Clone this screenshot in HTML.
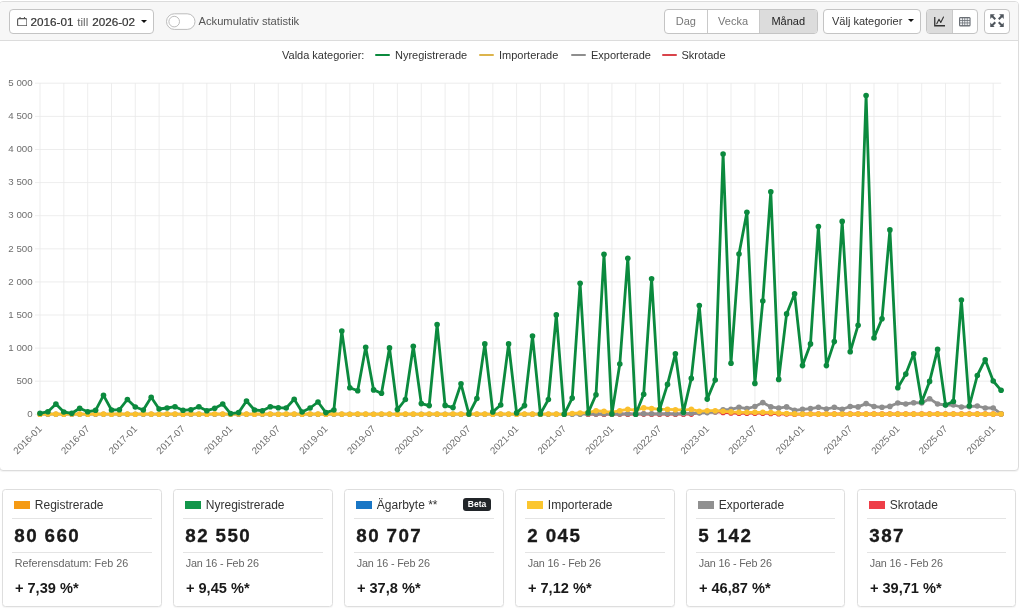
<!DOCTYPE html>
<html lang="sv"><head><meta charset="utf-8"><title>Fordonsstatistik</title>
<style>
*{box-sizing:border-box;margin:0;padding:0}
html,body{width:1020px;height:609px;overflow:hidden;background:#fff}
body{font-family:"Liberation Sans",sans-serif;color:#333;position:relative}
.card,.legend,.scard{will-change:transform}
.card{position:absolute;left:-1px;top:1px;width:1019.5px;height:470px;border:1px solid #dcdcdc;border-radius:4px;background:#fff;box-shadow:0 1px 1px rgba(0,0,0,.05)}
.hdr{position:absolute;left:0;top:0;right:0;height:39px;background:#f7f7f7;border-bottom:1px solid #dcdcdc;border-radius:3px 3px 0 0}
.btn{position:absolute;top:6.8px;height:25.4px;background:#fff;border:1px solid #c4c4c4;border-radius:4px;font-size:11px;line-height:23px;color:#333;white-space:nowrap}
.btn.act{background:#dcdcdc;border-color:#c4c4c4}
.grp{position:absolute;top:6.8px;height:25.4px;border:1px solid #c4c4c4;border-radius:4px;background:#fff;overflow:hidden;display:flex;font-size:11px;line-height:23px}
.grp>div{height:100%;text-align:center;border-right:1px solid #c9c9c9;color:#777}
.grp>div:last-child{border-right:0}
.grp>div.act{background:#dcdcdc;color:#222}
.caret{display:inline-block;width:0;height:0;border-left:3.3px solid transparent;border-right:3.3px solid transparent;border-top:3.6px solid #111;vertical-align:middle;margin-left:6px;position:relative;top:-1px}
.tog{position:absolute;left:165.5px;top:11px;width:29.5px;height:16.5px;border:1px solid #bdbdbd;border-radius:9px;background:#fff}
.tog:after{content:"";position:absolute;left:1.5px;top:1.5px;width:11.5px;height:11.5px;border-radius:50%;border:1px solid #bdbdbd;background:#fff}
.toglbl{position:absolute;left:198.5px;top:6.5px;font-size:11.2px;line-height:25px;color:#555;white-space:nowrap}
.legend{position:absolute;top:46.5px;left:0;font-size:11px;line-height:16px;color:#333;white-space:nowrap}
.legend span{position:absolute;top:0}
.legend i{position:absolute;top:6.5px;height:2.6px;width:15.5px;border-radius:1px}
svg.chart{position:absolute;left:0;top:70px}
svg .ax text{font-family:"Liberation Sans",sans-serif;font-size:9.7px;fill:#6e6e6e}
.scard{position:absolute;top:489px;width:159.3px;height:117.6px;border:1px solid #dedede;border-radius:3.5px;background:#fff;box-shadow:0 1px 1px rgba(0,0,0,.04)}
.scard .st{position:absolute;left:0;top:0;width:100%;height:28px}
.scard .st i{position:absolute;left:11px;top:11.4px;width:15.6px;height:7.5px}
.scard .st span{position:absolute;left:31.8px;top:7.4px;font-size:12px;line-height:16px;color:#333;white-space:nowrap}
.scard .st .beta{left:auto;right:11.8px;top:8.4px;background:#212529;color:#fff;font-size:8.5px;font-weight:700;line-height:13px;height:13px;padding:0 5px;border-radius:3px}
.scard .hr{position:absolute;left:9px;right:9px;height:1px;background:#e4e4e4}
.scard .h1{top:28px}
.scard .h2{top:61.5px}
.scard .num{position:absolute;left:11.3px;top:34px;font-size:18.8px;line-height:24px;font-weight:700;letter-spacing:1.4px;-webkit-text-stroke:.3px #1a1a1a;color:#1a1a1a;white-space:nowrap}
.scard .sub{position:absolute;left:11.8px;top:65.4px;font-size:10.8px;line-height:16px;color:#666;white-space:nowrap}
.scard .pct{position:absolute;left:11.9px;top:88.4px;font-size:14.6px;line-height:20px;font-weight:700;color:#1a1a1a;white-space:nowrap}
</style></head><body>
<div class="card">
 <div class="hdr">
  <div class="btn" style="left:9px;width:144.5px;padding-left:20.5px;font-size:11.7px;word-spacing:.6px"><svg style="position:absolute;left:6.8px;top:7px" width="10.5" height="9.5" viewBox="0 0 21 19"><rect x="1.2" y="3.2" width="18.6" height="14.6" rx="2.5" fill="none" stroke="#555" stroke-width="2.2"/><path d="M6 0v4M15 0v4" stroke="#555" stroke-width="2.2"/></svg><b style="font-weight:400;-webkit-text-stroke:.2px #333">2016-01</b> <span style="color:#666">till</span> <b style="font-weight:400;-webkit-text-stroke:.2px #333">2026-02</b><span class="caret"></span></div>
  <svg style="position:absolute;left:164px;top:9px" width="34" height="22" viewBox="0 0 34 22"><rect x="2.5" y="2.8" width="28.5" height="15.6" rx="7.8" fill="#fff" stroke="#bcbcbc" stroke-width="1"/><circle cx="10.2" cy="10.6" r="5.3" fill="#fff" stroke="#bcbcbc" stroke-width="1"/></svg><div class="toglbl">Ackumulativ statistik</div>
  <div class="grp" style="left:664px;width:154px"><div style="width:43px">Dag</div><div style="width:52.5px">Vecka</div><div class="act" style="width:58px">Månad</div></div>
  <div class="btn" style="left:823px;width:97.6px;padding-left:8px">Välj kategorier<span class="caret"></span></div>
  <div class="grp" style="left:926px;width:52px"><div class="act" style="width:27px;position:relative"><svg style="position:absolute;left:7px;top:6.5px" width="11" height="10.5" viewBox="0 0 22 21"><path d="M1.5 2v17.5H22" fill="none" stroke="#333" stroke-width="2.6"/><path d="M5.5 15.5l4.5-9 3.5 6.5L19 2" fill="none" stroke="#333" stroke-width="2.2" stroke-linejoin="round" stroke-linecap="round"/></svg></div><div style="width:25px;position:relative"><svg style="position:absolute;left:6.5px;top:7.4px" width="11.6" height="9.4" viewBox="0 0 23.2 18.8"><rect x="0" y="0" width="23.2" height="18.8" rx="3" fill="#6a6f75"/><g fill="#eef0f2"><rect x="2.2" y="2.6" width="3.9" height="3.4"/><rect x="7.5" y="2.6" width="3.4" height="3.4"/><rect x="12.3" y="2.6" width="3.4" height="3.4"/><rect x="17.1" y="2.6" width="3.9" height="3.4"/><rect x="2.2" y="7.6" width="3.9" height="3.5"/><rect x="7.5" y="7.6" width="3.4" height="3.5"/><rect x="12.3" y="7.6" width="3.4" height="3.5"/><rect x="17.1" y="7.6" width="3.9" height="3.5"/><rect x="2.2" y="12.7" width="3.9" height="3.5"/><rect x="7.5" y="12.7" width="3.4" height="3.5"/><rect x="12.3" y="12.7" width="3.4" height="3.5"/><rect x="17.1" y="12.7" width="3.9" height="3.5"/></g></svg></div></div>
  <div class="btn" style="left:984.3px;width:25.4px"><svg style="position:absolute;left:4.7px;top:4.2px" width="14" height="13.5" viewBox="0 0 28 27"><g fill="#4f565d"><path d="M0.5 0.5 L9.8 0.5 L6.6 3.7 L12.0 9.1 L9.1 12.0 L3.7 6.6 L0.5 9.8z"/><path d="M27.5 0.5 L18.2 0.5 L21.4 3.7 L16.0 9.1 L18.9 12.0 L24.3 6.6 L27.5 9.8z"/><path d="M0.5 26.5 L9.8 26.5 L6.6 23.3 L12.0 17.9 L9.1 15.0 L3.7 20.4 L0.5 17.2z"/><path d="M27.5 26.5 L18.2 26.5 L21.4 23.3 L16.0 17.9 L18.9 15.0 L24.3 20.4 L27.5 17.2z"/></g></svg></div>
 </div>
</div>
<div class="legend">
 <span style="left:282px">Valda kategorier:</span>
 <i style="left:374.5px;background:#0b8a3e"></i><span style="left:395px">Nyregistrerade</span>
 <i style="left:478.5px;background:#dcb44c"></i><span style="left:499px">Importerade</span>
 <i style="left:570.5px;background:#8e8e8e"></i><span style="left:591px">Exporterade</span>
 <i style="left:661.5px;background:#d9434a"></i><span style="left:681.5px">Skrotade</span>
</div>
<svg class="chart" width="1020" height="400" viewBox="0 70 1020 400"><g stroke="#e8e8e8" stroke-width="0.8" shape-rendering="auto"><line x1="35" x2="1001.2" y1="414.3" y2="414.3"/><line x1="35" x2="1001.2" y1="381.2" y2="381.2"/><line x1="35" x2="1001.2" y1="348.1" y2="348.1"/><line x1="35" x2="1001.2" y1="315.0" y2="315.0"/><line x1="35" x2="1001.2" y1="281.9" y2="281.9"/><line x1="35" x2="1001.2" y1="248.8" y2="248.8"/><line x1="35" x2="1001.2" y1="215.7" y2="215.7"/><line x1="35" x2="1001.2" y1="182.6" y2="182.6"/><line x1="35" x2="1001.2" y1="149.5" y2="149.5"/><line x1="35" x2="1001.2" y1="116.4" y2="116.4"/><line x1="35" x2="1001.2" y1="83.2" y2="83.2"/><line x1="40.0" x2="40.0" y1="83.2" y2="415.8"/><line x1="63.8" x2="63.8" y1="83.2" y2="415.8"/><line x1="87.7" x2="87.7" y1="83.2" y2="415.8"/><line x1="111.5" x2="111.5" y1="83.2" y2="415.8"/><line x1="135.3" x2="135.3" y1="83.2" y2="415.8"/><line x1="159.1" x2="159.1" y1="83.2" y2="415.8"/><line x1="183.0" x2="183.0" y1="83.2" y2="415.8"/><line x1="206.8" x2="206.8" y1="83.2" y2="415.8"/><line x1="230.6" x2="230.6" y1="83.2" y2="415.8"/><line x1="254.5" x2="254.5" y1="83.2" y2="415.8"/><line x1="278.3" x2="278.3" y1="83.2" y2="415.8"/><line x1="302.1" x2="302.1" y1="83.2" y2="415.8"/><line x1="325.9" x2="325.9" y1="83.2" y2="415.8"/><line x1="349.8" x2="349.8" y1="83.2" y2="415.8"/><line x1="373.6" x2="373.6" y1="83.2" y2="415.8"/><line x1="397.4" x2="397.4" y1="83.2" y2="415.8"/><line x1="421.3" x2="421.3" y1="83.2" y2="415.8"/><line x1="445.1" x2="445.1" y1="83.2" y2="415.8"/><line x1="468.9" x2="468.9" y1="83.2" y2="415.8"/><line x1="492.8" x2="492.8" y1="83.2" y2="415.8"/><line x1="516.6" x2="516.6" y1="83.2" y2="415.8"/><line x1="540.4" x2="540.4" y1="83.2" y2="415.8"/><line x1="564.2" x2="564.2" y1="83.2" y2="415.8"/><line x1="588.1" x2="588.1" y1="83.2" y2="415.8"/><line x1="611.9" x2="611.9" y1="83.2" y2="415.8"/><line x1="635.7" x2="635.7" y1="83.2" y2="415.8"/><line x1="659.6" x2="659.6" y1="83.2" y2="415.8"/><line x1="683.4" x2="683.4" y1="83.2" y2="415.8"/><line x1="707.2" x2="707.2" y1="83.2" y2="415.8"/><line x1="731.0" x2="731.0" y1="83.2" y2="415.8"/><line x1="754.9" x2="754.9" y1="83.2" y2="415.8"/><line x1="778.7" x2="778.7" y1="83.2" y2="415.8"/><line x1="802.5" x2="802.5" y1="83.2" y2="415.8"/><line x1="826.4" x2="826.4" y1="83.2" y2="415.8"/><line x1="850.2" x2="850.2" y1="83.2" y2="415.8"/><line x1="874.0" x2="874.0" y1="83.2" y2="415.8"/><line x1="897.8" x2="897.8" y1="83.2" y2="415.8"/><line x1="921.7" x2="921.7" y1="83.2" y2="415.8"/><line x1="945.5" x2="945.5" y1="83.2" y2="415.8"/><line x1="969.3" x2="969.3" y1="83.2" y2="415.8"/><line x1="993.2" x2="993.2" y1="83.2" y2="415.8"/></g><g class="ax"><text x="32.6" y="417.0" text-anchor="end">0</text><text x="32.6" y="383.9" text-anchor="end">500</text><text x="32.6" y="350.8" text-anchor="end">1 000</text><text x="32.6" y="317.7" text-anchor="end">1 500</text><text x="32.6" y="284.6" text-anchor="end">2 000</text><text x="32.6" y="251.5" text-anchor="end">2 500</text><text x="32.6" y="218.4" text-anchor="end">3 000</text><text x="32.6" y="185.3" text-anchor="end">3 500</text><text x="32.6" y="152.2" text-anchor="end">4 000</text><text x="32.6" y="119.1" text-anchor="end">4 500</text><text x="32.6" y="86.0" text-anchor="end">5 000</text></g><g class="ax"><text transform="translate(42.5,429.5) rotate(-45)" text-anchor="end">2016-01</text><text transform="translate(90.2,429.5) rotate(-45)" text-anchor="end">2016-07</text><text transform="translate(137.8,429.5) rotate(-45)" text-anchor="end">2017-01</text><text transform="translate(185.5,429.5) rotate(-45)" text-anchor="end">2017-07</text><text transform="translate(233.1,429.5) rotate(-45)" text-anchor="end">2018-01</text><text transform="translate(280.8,429.5) rotate(-45)" text-anchor="end">2018-07</text><text transform="translate(328.4,429.5) rotate(-45)" text-anchor="end">2019-01</text><text transform="translate(376.1,429.5) rotate(-45)" text-anchor="end">2019-07</text><text transform="translate(423.8,429.5) rotate(-45)" text-anchor="end">2020-01</text><text transform="translate(471.4,429.5) rotate(-45)" text-anchor="end">2020-07</text><text transform="translate(519.1,429.5) rotate(-45)" text-anchor="end">2021-01</text><text transform="translate(566.7,429.5) rotate(-45)" text-anchor="end">2021-07</text><text transform="translate(614.4,429.5) rotate(-45)" text-anchor="end">2022-01</text><text transform="translate(662.1,429.5) rotate(-45)" text-anchor="end">2022-07</text><text transform="translate(709.7,429.5) rotate(-45)" text-anchor="end">2023-01</text><text transform="translate(757.4,429.5) rotate(-45)" text-anchor="end">2023-07</text><text transform="translate(805.0,429.5) rotate(-45)" text-anchor="end">2024-01</text><text transform="translate(852.7,429.5) rotate(-45)" text-anchor="end">2024-07</text><text transform="translate(900.3,429.5) rotate(-45)" text-anchor="end">2025-01</text><text transform="translate(948.0,429.5) rotate(-45)" text-anchor="end">2025-07</text><text transform="translate(995.7,429.5) rotate(-45)" text-anchor="end">2026-01</text></g><path d="M588.1,414.2 L596.0,414.1 L604.0,414.2 L611.9,414.2 L619.8,414.1 L627.8,414.2 L635.7,414.2 L643.7,414.1 L651.6,414.2 L659.6,414.2 L667.5,414.1 L675.4,414.2 L683.4,414.2 L691.3,414.1 L699.3,412.5 L707.2,411.8 L715.2,411.7 L723.1,412.4 L731.0,412.9 L739.0,413.3 L746.9,413.2 L754.9,413.2 L762.8,413.2 L770.8,413.4 L778.7,413.8 L786.6,414.0 L794.6,414.2 L802.5,414.1 L810.5,414.0 L818.4,414.1 L826.4,414.0 L834.3,414.1 L842.2,414.0 L850.2,414.1 L858.1,414.0 L866.1,414.1 L874.0,414.0 L882.0,414.1 L889.9,414.0 L897.8,414.1 L905.8,414.0 L913.7,414.1 L921.7,414.0 L929.6,414.1 L937.6,414.0 L945.5,414.1 L953.4,414.0 L961.4,414.1 L969.3,414.0 L977.3,414.1 L985.2,414.0 L993.2,414.1 L1001.1,414.0" fill="none" stroke="#e5383b" stroke-width="2.8" stroke-linejoin="round" stroke-linecap="round"/><g fill="#e5383b"><circle cx="588.1" cy="414.2" r="2.8"/><circle cx="596.0" cy="414.1" r="2.8"/><circle cx="604.0" cy="414.2" r="2.8"/><circle cx="611.9" cy="414.2" r="2.8"/><circle cx="619.8" cy="414.1" r="2.8"/><circle cx="627.8" cy="414.2" r="2.8"/><circle cx="635.7" cy="414.2" r="2.8"/><circle cx="643.7" cy="414.1" r="2.8"/><circle cx="651.6" cy="414.2" r="2.8"/><circle cx="659.6" cy="414.2" r="2.8"/><circle cx="667.5" cy="414.1" r="2.8"/><circle cx="675.4" cy="414.2" r="2.8"/><circle cx="683.4" cy="414.2" r="2.8"/><circle cx="691.3" cy="414.1" r="2.8"/><circle cx="699.3" cy="412.5" r="2.8"/><circle cx="707.2" cy="411.8" r="2.8"/><circle cx="715.2" cy="411.7" r="2.8"/><circle cx="723.1" cy="412.4" r="2.8"/><circle cx="731.0" cy="412.9" r="2.8"/><circle cx="739.0" cy="413.3" r="2.8"/><circle cx="746.9" cy="413.2" r="2.8"/><circle cx="754.9" cy="413.2" r="2.8"/><circle cx="762.8" cy="413.2" r="2.8"/><circle cx="770.8" cy="413.4" r="2.8"/><circle cx="778.7" cy="413.8" r="2.8"/><circle cx="786.6" cy="414.0" r="2.8"/><circle cx="794.6" cy="414.2" r="2.8"/><circle cx="802.5" cy="414.1" r="2.8"/><circle cx="810.5" cy="414.0" r="2.8"/><circle cx="818.4" cy="414.1" r="2.8"/><circle cx="826.4" cy="414.0" r="2.8"/><circle cx="834.3" cy="414.1" r="2.8"/><circle cx="842.2" cy="414.0" r="2.8"/><circle cx="850.2" cy="414.1" r="2.8"/><circle cx="858.1" cy="414.0" r="2.8"/><circle cx="866.1" cy="414.1" r="2.8"/><circle cx="874.0" cy="414.0" r="2.8"/><circle cx="882.0" cy="414.1" r="2.8"/><circle cx="889.9" cy="414.0" r="2.8"/><circle cx="897.8" cy="414.1" r="2.8"/><circle cx="905.8" cy="414.0" r="2.8"/><circle cx="913.7" cy="414.1" r="2.8"/><circle cx="921.7" cy="414.0" r="2.8"/><circle cx="929.6" cy="414.1" r="2.8"/><circle cx="937.6" cy="414.0" r="2.8"/><circle cx="945.5" cy="414.1" r="2.8"/><circle cx="953.4" cy="414.0" r="2.8"/><circle cx="961.4" cy="414.1" r="2.8"/><circle cx="969.3" cy="414.0" r="2.8"/><circle cx="977.3" cy="414.1" r="2.8"/><circle cx="985.2" cy="414.0" r="2.8"/><circle cx="993.2" cy="414.1" r="2.8"/><circle cx="1001.1" cy="414.0" r="2.8"/></g><path d="M40.0,414.2 L47.9,414.2 L55.9,414.2 L63.8,414.2 L71.8,414.2 L79.7,414.2 L87.7,414.2 L95.6,414.2 L103.5,414.2 L111.5,414.2 L119.4,414.2 L127.4,414.2 L135.3,414.2 L143.3,414.2 L151.2,414.2 L159.1,414.2 L167.1,414.2 L175.0,414.2 L183.0,414.2 L190.9,414.2 L198.9,414.2 L206.8,414.2 L214.7,414.2 L222.7,414.2 L230.6,414.2 L238.6,414.2 L246.5,414.2 L254.5,414.2 L262.4,414.2 L270.3,414.2 L278.3,414.2 L286.2,414.2 L294.2,414.2 L302.1,414.2 L310.1,414.2 L318.0,414.2 L325.9,414.2 L333.9,414.2 L341.8,414.2 L349.8,414.2 L357.7,414.2 L365.7,414.2 L373.6,414.2 L381.5,414.2 L389.5,414.2 L397.4,414.2 L405.4,414.2 L413.3,414.2 L421.3,414.2 L429.2,414.2 L437.1,414.2 L445.1,414.2 L453.0,414.2 L461.0,414.2 L468.9,414.2 L476.9,414.2 L484.8,414.2 L492.8,414.2 L500.7,414.2 L508.6,414.2 L516.6,414.2 L524.5,414.2 L532.5,414.2 L540.4,414.2 L548.4,414.2 L556.3,414.2 L564.2,414.2 L572.2,414.2 L580.1,414.2 L588.1,414.0 L596.0,413.9 L604.0,414.0 L611.9,413.9 L619.8,414.0 L627.8,413.8 L635.7,413.9 L643.7,413.8 L651.6,413.8 L659.6,413.8 L667.5,413.6 L675.4,413.8 L683.4,413.6 L691.3,413.3 L699.3,413.0 L707.2,412.6 L715.2,412.0 L723.1,409.8 L731.0,409.3 L739.0,407.3 L746.9,408.6 L754.9,406.5 L762.8,402.6 L770.8,406.9 L778.7,408.1 L786.6,406.9 L794.6,410.3 L802.5,409.3 L810.5,408.6 L818.4,407.3 L826.4,409.0 L834.3,407.3 L842.2,409.3 L850.2,406.5 L858.1,406.9 L866.1,403.6 L874.0,406.5 L882.0,407.3 L889.9,406.4 L897.8,403.0 L905.8,404.0 L913.7,402.7 L921.7,403.0 L929.6,398.7 L937.6,404.0 L945.5,405.0 L953.4,405.0 L961.4,407.0 L969.3,406.6 L977.3,406.0 L985.2,408.0 L993.2,408.0 L1001.1,413.9" fill="none" stroke="#8e8e8e" stroke-width="2.8" stroke-linejoin="round" stroke-linecap="round"/><g fill="#8e8e8e"><circle cx="40.0" cy="414.2" r="2.8"/><circle cx="47.9" cy="414.2" r="2.8"/><circle cx="55.9" cy="414.2" r="2.8"/><circle cx="63.8" cy="414.2" r="2.8"/><circle cx="71.8" cy="414.2" r="2.8"/><circle cx="79.7" cy="414.2" r="2.8"/><circle cx="87.7" cy="414.2" r="2.8"/><circle cx="95.6" cy="414.2" r="2.8"/><circle cx="103.5" cy="414.2" r="2.8"/><circle cx="111.5" cy="414.2" r="2.8"/><circle cx="119.4" cy="414.2" r="2.8"/><circle cx="127.4" cy="414.2" r="2.8"/><circle cx="135.3" cy="414.2" r="2.8"/><circle cx="143.3" cy="414.2" r="2.8"/><circle cx="151.2" cy="414.2" r="2.8"/><circle cx="159.1" cy="414.2" r="2.8"/><circle cx="167.1" cy="414.2" r="2.8"/><circle cx="175.0" cy="414.2" r="2.8"/><circle cx="183.0" cy="414.2" r="2.8"/><circle cx="190.9" cy="414.2" r="2.8"/><circle cx="198.9" cy="414.2" r="2.8"/><circle cx="206.8" cy="414.2" r="2.8"/><circle cx="214.7" cy="414.2" r="2.8"/><circle cx="222.7" cy="414.2" r="2.8"/><circle cx="230.6" cy="414.2" r="2.8"/><circle cx="238.6" cy="414.2" r="2.8"/><circle cx="246.5" cy="414.2" r="2.8"/><circle cx="254.5" cy="414.2" r="2.8"/><circle cx="262.4" cy="414.2" r="2.8"/><circle cx="270.3" cy="414.2" r="2.8"/><circle cx="278.3" cy="414.2" r="2.8"/><circle cx="286.2" cy="414.2" r="2.8"/><circle cx="294.2" cy="414.2" r="2.8"/><circle cx="302.1" cy="414.2" r="2.8"/><circle cx="310.1" cy="414.2" r="2.8"/><circle cx="318.0" cy="414.2" r="2.8"/><circle cx="325.9" cy="414.2" r="2.8"/><circle cx="333.9" cy="414.2" r="2.8"/><circle cx="341.8" cy="414.2" r="2.8"/><circle cx="349.8" cy="414.2" r="2.8"/><circle cx="357.7" cy="414.2" r="2.8"/><circle cx="365.7" cy="414.2" r="2.8"/><circle cx="373.6" cy="414.2" r="2.8"/><circle cx="381.5" cy="414.2" r="2.8"/><circle cx="389.5" cy="414.2" r="2.8"/><circle cx="397.4" cy="414.2" r="2.8"/><circle cx="405.4" cy="414.2" r="2.8"/><circle cx="413.3" cy="414.2" r="2.8"/><circle cx="421.3" cy="414.2" r="2.8"/><circle cx="429.2" cy="414.2" r="2.8"/><circle cx="437.1" cy="414.2" r="2.8"/><circle cx="445.1" cy="414.2" r="2.8"/><circle cx="453.0" cy="414.2" r="2.8"/><circle cx="461.0" cy="414.2" r="2.8"/><circle cx="468.9" cy="414.2" r="2.8"/><circle cx="476.9" cy="414.2" r="2.8"/><circle cx="484.8" cy="414.2" r="2.8"/><circle cx="492.8" cy="414.2" r="2.8"/><circle cx="500.7" cy="414.2" r="2.8"/><circle cx="508.6" cy="414.2" r="2.8"/><circle cx="516.6" cy="414.2" r="2.8"/><circle cx="524.5" cy="414.2" r="2.8"/><circle cx="532.5" cy="414.2" r="2.8"/><circle cx="540.4" cy="414.2" r="2.8"/><circle cx="548.4" cy="414.2" r="2.8"/><circle cx="556.3" cy="414.2" r="2.8"/><circle cx="564.2" cy="414.2" r="2.8"/><circle cx="572.2" cy="414.2" r="2.8"/><circle cx="580.1" cy="414.2" r="2.8"/><circle cx="588.1" cy="414.0" r="2.8"/><circle cx="596.0" cy="413.9" r="2.8"/><circle cx="604.0" cy="414.0" r="2.8"/><circle cx="611.9" cy="413.9" r="2.8"/><circle cx="619.8" cy="414.0" r="2.8"/><circle cx="627.8" cy="413.8" r="2.8"/><circle cx="635.7" cy="413.9" r="2.8"/><circle cx="643.7" cy="413.8" r="2.8"/><circle cx="651.6" cy="413.8" r="2.8"/><circle cx="659.6" cy="413.8" r="2.8"/><circle cx="667.5" cy="413.6" r="2.8"/><circle cx="675.4" cy="413.8" r="2.8"/><circle cx="683.4" cy="413.6" r="2.8"/><circle cx="691.3" cy="413.3" r="2.8"/><circle cx="699.3" cy="413.0" r="2.8"/><circle cx="707.2" cy="412.6" r="2.8"/><circle cx="715.2" cy="412.0" r="2.8"/><circle cx="723.1" cy="409.8" r="2.8"/><circle cx="731.0" cy="409.3" r="2.8"/><circle cx="739.0" cy="407.3" r="2.8"/><circle cx="746.9" cy="408.6" r="2.8"/><circle cx="754.9" cy="406.5" r="2.8"/><circle cx="762.8" cy="402.6" r="2.8"/><circle cx="770.8" cy="406.9" r="2.8"/><circle cx="778.7" cy="408.1" r="2.8"/><circle cx="786.6" cy="406.9" r="2.8"/><circle cx="794.6" cy="410.3" r="2.8"/><circle cx="802.5" cy="409.3" r="2.8"/><circle cx="810.5" cy="408.6" r="2.8"/><circle cx="818.4" cy="407.3" r="2.8"/><circle cx="826.4" cy="409.0" r="2.8"/><circle cx="834.3" cy="407.3" r="2.8"/><circle cx="842.2" cy="409.3" r="2.8"/><circle cx="850.2" cy="406.5" r="2.8"/><circle cx="858.1" cy="406.9" r="2.8"/><circle cx="866.1" cy="403.6" r="2.8"/><circle cx="874.0" cy="406.5" r="2.8"/><circle cx="882.0" cy="407.3" r="2.8"/><circle cx="889.9" cy="406.4" r="2.8"/><circle cx="897.8" cy="403.0" r="2.8"/><circle cx="905.8" cy="404.0" r="2.8"/><circle cx="913.7" cy="402.7" r="2.8"/><circle cx="921.7" cy="403.0" r="2.8"/><circle cx="929.6" cy="398.7" r="2.8"/><circle cx="937.6" cy="404.0" r="2.8"/><circle cx="945.5" cy="405.0" r="2.8"/><circle cx="953.4" cy="405.0" r="2.8"/><circle cx="961.4" cy="407.0" r="2.8"/><circle cx="969.3" cy="406.6" r="2.8"/><circle cx="977.3" cy="406.0" r="2.8"/><circle cx="985.2" cy="408.0" r="2.8"/><circle cx="993.2" cy="408.0" r="2.8"/><circle cx="1001.1" cy="413.9" r="2.8"/></g><path d="M40.0,414.2 L47.9,414.0 L55.9,414.1 L63.8,414.2 L71.8,414.0 L79.7,414.1 L87.7,414.2 L95.6,414.0 L103.5,414.1 L111.5,414.2 L119.4,414.0 L127.4,414.1 L135.3,414.2 L143.3,414.0 L151.2,414.1 L159.1,414.2 L167.1,414.0 L175.0,414.1 L183.0,414.2 L190.9,414.0 L198.9,414.1 L206.8,414.2 L214.7,414.0 L222.7,414.1 L230.6,414.2 L238.6,414.0 L246.5,414.1 L254.5,414.2 L262.4,414.0 L270.3,414.1 L278.3,414.2 L286.2,414.0 L294.2,414.1 L302.1,414.2 L310.1,414.0 L318.0,414.1 L325.9,414.2 L333.9,414.0 L341.8,414.1 L349.8,414.2 L357.7,414.0 L365.7,414.1 L373.6,414.2 L381.5,414.0 L389.5,414.1 L397.4,414.2 L405.4,414.0 L413.3,414.1 L421.3,414.2 L429.2,414.0 L437.1,414.1 L445.1,414.2 L453.0,414.0 L461.0,414.1 L468.9,414.2 L476.9,414.0 L484.8,414.1 L492.8,414.2 L500.7,414.0 L508.6,414.1 L516.6,414.2 L524.5,414.0 L532.5,414.1 L540.4,414.2 L548.4,414.0 L556.3,414.1 L564.2,414.3 L572.2,413.5 L580.1,413.0 L588.1,412.6 L596.0,410.7 L604.0,411.3 L611.9,412.3 L619.8,410.7 L627.8,409.3 L635.7,410.1 L643.7,407.9 L651.6,408.5 L659.6,409.3 L667.5,409.3 L675.4,409.7 L683.4,410.1 L691.3,409.3 L699.3,411.3 L707.2,410.7 L715.2,410.7 L723.1,411.3 L731.0,411.9 L739.0,412.3 L746.9,412.3 L754.9,412.3 L762.8,412.3 L770.8,412.6 L778.7,413.1 L786.6,413.5 L794.6,413.9 L802.5,414.1 L810.5,414.0 L818.4,414.1 L826.4,414.0 L834.3,414.1 L842.2,414.0 L850.2,414.1 L858.1,414.0 L866.1,414.1 L874.0,414.0 L882.0,414.1 L889.9,414.0 L897.8,414.1 L905.8,414.0 L913.7,414.1 L921.7,414.0 L929.6,414.1 L937.6,414.0 L945.5,414.1 L953.4,414.0 L961.4,414.1 L969.3,414.0 L977.3,414.1 L985.2,414.0 L993.2,414.1 L1001.1,414.0" fill="none" stroke="#fbc02d" stroke-width="2.8" stroke-linejoin="round" stroke-linecap="round"/><g fill="#fbc02d"><circle cx="40.0" cy="414.2" r="2.8"/><circle cx="47.9" cy="414.0" r="2.8"/><circle cx="55.9" cy="414.1" r="2.8"/><circle cx="63.8" cy="414.2" r="2.8"/><circle cx="71.8" cy="414.0" r="2.8"/><circle cx="79.7" cy="414.1" r="2.8"/><circle cx="87.7" cy="414.2" r="2.8"/><circle cx="95.6" cy="414.0" r="2.8"/><circle cx="103.5" cy="414.1" r="2.8"/><circle cx="111.5" cy="414.2" r="2.8"/><circle cx="119.4" cy="414.0" r="2.8"/><circle cx="127.4" cy="414.1" r="2.8"/><circle cx="135.3" cy="414.2" r="2.8"/><circle cx="143.3" cy="414.0" r="2.8"/><circle cx="151.2" cy="414.1" r="2.8"/><circle cx="159.1" cy="414.2" r="2.8"/><circle cx="167.1" cy="414.0" r="2.8"/><circle cx="175.0" cy="414.1" r="2.8"/><circle cx="183.0" cy="414.2" r="2.8"/><circle cx="190.9" cy="414.0" r="2.8"/><circle cx="198.9" cy="414.1" r="2.8"/><circle cx="206.8" cy="414.2" r="2.8"/><circle cx="214.7" cy="414.0" r="2.8"/><circle cx="222.7" cy="414.1" r="2.8"/><circle cx="230.6" cy="414.2" r="2.8"/><circle cx="238.6" cy="414.0" r="2.8"/><circle cx="246.5" cy="414.1" r="2.8"/><circle cx="254.5" cy="414.2" r="2.8"/><circle cx="262.4" cy="414.0" r="2.8"/><circle cx="270.3" cy="414.1" r="2.8"/><circle cx="278.3" cy="414.2" r="2.8"/><circle cx="286.2" cy="414.0" r="2.8"/><circle cx="294.2" cy="414.1" r="2.8"/><circle cx="302.1" cy="414.2" r="2.8"/><circle cx="310.1" cy="414.0" r="2.8"/><circle cx="318.0" cy="414.1" r="2.8"/><circle cx="325.9" cy="414.2" r="2.8"/><circle cx="333.9" cy="414.0" r="2.8"/><circle cx="341.8" cy="414.1" r="2.8"/><circle cx="349.8" cy="414.2" r="2.8"/><circle cx="357.7" cy="414.0" r="2.8"/><circle cx="365.7" cy="414.1" r="2.8"/><circle cx="373.6" cy="414.2" r="2.8"/><circle cx="381.5" cy="414.0" r="2.8"/><circle cx="389.5" cy="414.1" r="2.8"/><circle cx="397.4" cy="414.2" r="2.8"/><circle cx="405.4" cy="414.0" r="2.8"/><circle cx="413.3" cy="414.1" r="2.8"/><circle cx="421.3" cy="414.2" r="2.8"/><circle cx="429.2" cy="414.0" r="2.8"/><circle cx="437.1" cy="414.1" r="2.8"/><circle cx="445.1" cy="414.2" r="2.8"/><circle cx="453.0" cy="414.0" r="2.8"/><circle cx="461.0" cy="414.1" r="2.8"/><circle cx="468.9" cy="414.2" r="2.8"/><circle cx="476.9" cy="414.0" r="2.8"/><circle cx="484.8" cy="414.1" r="2.8"/><circle cx="492.8" cy="414.2" r="2.8"/><circle cx="500.7" cy="414.0" r="2.8"/><circle cx="508.6" cy="414.1" r="2.8"/><circle cx="516.6" cy="414.2" r="2.8"/><circle cx="524.5" cy="414.0" r="2.8"/><circle cx="532.5" cy="414.1" r="2.8"/><circle cx="540.4" cy="414.2" r="2.8"/><circle cx="548.4" cy="414.0" r="2.8"/><circle cx="556.3" cy="414.1" r="2.8"/><circle cx="564.2" cy="414.3" r="2.8"/><circle cx="572.2" cy="413.5" r="2.8"/><circle cx="580.1" cy="413.0" r="2.8"/><circle cx="588.1" cy="412.6" r="2.8"/><circle cx="596.0" cy="410.7" r="2.8"/><circle cx="604.0" cy="411.3" r="2.8"/><circle cx="611.9" cy="412.3" r="2.8"/><circle cx="619.8" cy="410.7" r="2.8"/><circle cx="627.8" cy="409.3" r="2.8"/><circle cx="635.7" cy="410.1" r="2.8"/><circle cx="643.7" cy="407.9" r="2.8"/><circle cx="651.6" cy="408.5" r="2.8"/><circle cx="659.6" cy="409.3" r="2.8"/><circle cx="667.5" cy="409.3" r="2.8"/><circle cx="675.4" cy="409.7" r="2.8"/><circle cx="683.4" cy="410.1" r="2.8"/><circle cx="691.3" cy="409.3" r="2.8"/><circle cx="699.3" cy="411.3" r="2.8"/><circle cx="707.2" cy="410.7" r="2.8"/><circle cx="715.2" cy="410.7" r="2.8"/><circle cx="723.1" cy="411.3" r="2.8"/><circle cx="731.0" cy="411.9" r="2.8"/><circle cx="739.0" cy="412.3" r="2.8"/><circle cx="746.9" cy="412.3" r="2.8"/><circle cx="754.9" cy="412.3" r="2.8"/><circle cx="762.8" cy="412.3" r="2.8"/><circle cx="770.8" cy="412.6" r="2.8"/><circle cx="778.7" cy="413.1" r="2.8"/><circle cx="786.6" cy="413.5" r="2.8"/><circle cx="794.6" cy="413.9" r="2.8"/><circle cx="802.5" cy="414.1" r="2.8"/><circle cx="810.5" cy="414.0" r="2.8"/><circle cx="818.4" cy="414.1" r="2.8"/><circle cx="826.4" cy="414.0" r="2.8"/><circle cx="834.3" cy="414.1" r="2.8"/><circle cx="842.2" cy="414.0" r="2.8"/><circle cx="850.2" cy="414.1" r="2.8"/><circle cx="858.1" cy="414.0" r="2.8"/><circle cx="866.1" cy="414.1" r="2.8"/><circle cx="874.0" cy="414.0" r="2.8"/><circle cx="882.0" cy="414.1" r="2.8"/><circle cx="889.9" cy="414.0" r="2.8"/><circle cx="897.8" cy="414.1" r="2.8"/><circle cx="905.8" cy="414.0" r="2.8"/><circle cx="913.7" cy="414.1" r="2.8"/><circle cx="921.7" cy="414.0" r="2.8"/><circle cx="929.6" cy="414.1" r="2.8"/><circle cx="937.6" cy="414.0" r="2.8"/><circle cx="945.5" cy="414.1" r="2.8"/><circle cx="953.4" cy="414.0" r="2.8"/><circle cx="961.4" cy="414.1" r="2.8"/><circle cx="969.3" cy="414.0" r="2.8"/><circle cx="977.3" cy="414.1" r="2.8"/><circle cx="985.2" cy="414.0" r="2.8"/><circle cx="993.2" cy="414.1" r="2.8"/><circle cx="1001.1" cy="414.0" r="2.8"/></g><path d="M40.0,413.3 L47.9,411.7 L55.9,404.1 L63.8,412.0 L71.8,413.3 L79.7,408.3 L87.7,411.7 L95.6,410.3 L103.5,395.3 L111.5,410.0 L119.4,409.7 L127.4,399.5 L135.3,407.0 L143.3,410.0 L151.2,397.3 L159.1,409.0 L167.1,408.0 L175.0,406.7 L183.0,410.3 L190.9,409.7 L198.9,406.7 L206.8,410.7 L214.7,408.3 L222.7,404.0 L230.6,413.6 L238.6,412.6 L246.5,401.0 L254.5,410.0 L262.4,410.7 L270.3,406.7 L278.3,407.7 L286.2,408.0 L294.2,399.3 L302.1,412.0 L310.1,408.0 L318.0,402.0 L325.9,412.6 L333.9,410.0 L341.8,331.1 L349.8,387.7 L357.7,390.8 L365.7,347.3 L373.6,389.9 L381.5,393.2 L389.5,347.9 L397.4,409.6 L405.4,399.5 L413.3,346.3 L421.3,403.6 L429.2,405.6 L437.1,324.6 L445.1,405.4 L453.0,407.6 L461.0,383.8 L468.9,414.1 L476.9,398.5 L484.8,343.9 L492.8,411.9 L500.7,405.0 L508.6,343.9 L516.6,412.9 L524.5,405.6 L532.5,336.1 L540.4,413.9 L548.4,399.5 L556.3,314.9 L564.2,414.3 L572.2,398.1 L580.1,283.3 L588.1,412.9 L596.0,394.8 L604.0,254.3 L611.9,413.9 L619.8,364.0 L627.8,258.2 L635.7,414.3 L643.7,394.2 L651.6,278.8 L659.6,409.6 L667.5,384.4 L675.4,353.7 L683.4,412.3 L691.3,378.4 L699.3,305.6 L707.2,399.1 L715.2,380.0 L723.1,154.0 L731.0,363.2 L739.0,254.0 L746.9,212.2 L754.9,383.4 L762.8,301.0 L770.8,191.7 L778.7,379.4 L786.6,313.9 L794.6,293.7 L802.5,365.6 L810.5,343.9 L818.4,226.6 L826.4,365.6 L834.3,341.6 L842.2,221.4 L850.2,351.8 L858.1,325.2 L866.1,95.5 L874.0,338.0 L882.0,318.7 L889.9,229.9 L897.8,387.7 L905.8,374.1 L913.7,353.7 L921.7,402.0 L929.6,381.4 L937.6,349.4 L945.5,405.0 L953.4,401.5 L961.4,300.0 L969.3,406.0 L977.3,375.5 L985.2,359.7 L993.2,381.0 L1001.1,390.3" fill="none" stroke="#0b8a3e" stroke-width="2.8" stroke-linejoin="round" stroke-linecap="round"/><g fill="#0b8a3e"><circle cx="40.0" cy="413.3" r="2.8"/><circle cx="47.9" cy="411.7" r="2.8"/><circle cx="55.9" cy="404.1" r="2.8"/><circle cx="63.8" cy="412.0" r="2.8"/><circle cx="71.8" cy="413.3" r="2.8"/><circle cx="79.7" cy="408.3" r="2.8"/><circle cx="87.7" cy="411.7" r="2.8"/><circle cx="95.6" cy="410.3" r="2.8"/><circle cx="103.5" cy="395.3" r="2.8"/><circle cx="111.5" cy="410.0" r="2.8"/><circle cx="119.4" cy="409.7" r="2.8"/><circle cx="127.4" cy="399.5" r="2.8"/><circle cx="135.3" cy="407.0" r="2.8"/><circle cx="143.3" cy="410.0" r="2.8"/><circle cx="151.2" cy="397.3" r="2.8"/><circle cx="159.1" cy="409.0" r="2.8"/><circle cx="167.1" cy="408.0" r="2.8"/><circle cx="175.0" cy="406.7" r="2.8"/><circle cx="183.0" cy="410.3" r="2.8"/><circle cx="190.9" cy="409.7" r="2.8"/><circle cx="198.9" cy="406.7" r="2.8"/><circle cx="206.8" cy="410.7" r="2.8"/><circle cx="214.7" cy="408.3" r="2.8"/><circle cx="222.7" cy="404.0" r="2.8"/><circle cx="230.6" cy="413.6" r="2.8"/><circle cx="238.6" cy="412.6" r="2.8"/><circle cx="246.5" cy="401.0" r="2.8"/><circle cx="254.5" cy="410.0" r="2.8"/><circle cx="262.4" cy="410.7" r="2.8"/><circle cx="270.3" cy="406.7" r="2.8"/><circle cx="278.3" cy="407.7" r="2.8"/><circle cx="286.2" cy="408.0" r="2.8"/><circle cx="294.2" cy="399.3" r="2.8"/><circle cx="302.1" cy="412.0" r="2.8"/><circle cx="310.1" cy="408.0" r="2.8"/><circle cx="318.0" cy="402.0" r="2.8"/><circle cx="325.9" cy="412.6" r="2.8"/><circle cx="333.9" cy="410.0" r="2.8"/><circle cx="341.8" cy="331.1" r="2.8"/><circle cx="349.8" cy="387.7" r="2.8"/><circle cx="357.7" cy="390.8" r="2.8"/><circle cx="365.7" cy="347.3" r="2.8"/><circle cx="373.6" cy="389.9" r="2.8"/><circle cx="381.5" cy="393.2" r="2.8"/><circle cx="389.5" cy="347.9" r="2.8"/><circle cx="397.4" cy="409.6" r="2.8"/><circle cx="405.4" cy="399.5" r="2.8"/><circle cx="413.3" cy="346.3" r="2.8"/><circle cx="421.3" cy="403.6" r="2.8"/><circle cx="429.2" cy="405.6" r="2.8"/><circle cx="437.1" cy="324.6" r="2.8"/><circle cx="445.1" cy="405.4" r="2.8"/><circle cx="453.0" cy="407.6" r="2.8"/><circle cx="461.0" cy="383.8" r="2.8"/><circle cx="468.9" cy="414.1" r="2.8"/><circle cx="476.9" cy="398.5" r="2.8"/><circle cx="484.8" cy="343.9" r="2.8"/><circle cx="492.8" cy="411.9" r="2.8"/><circle cx="500.7" cy="405.0" r="2.8"/><circle cx="508.6" cy="343.9" r="2.8"/><circle cx="516.6" cy="412.9" r="2.8"/><circle cx="524.5" cy="405.6" r="2.8"/><circle cx="532.5" cy="336.1" r="2.8"/><circle cx="540.4" cy="413.9" r="2.8"/><circle cx="548.4" cy="399.5" r="2.8"/><circle cx="556.3" cy="314.9" r="2.8"/><circle cx="564.2" cy="414.3" r="2.8"/><circle cx="572.2" cy="398.1" r="2.8"/><circle cx="580.1" cy="283.3" r="2.8"/><circle cx="588.1" cy="412.9" r="2.8"/><circle cx="596.0" cy="394.8" r="2.8"/><circle cx="604.0" cy="254.3" r="2.8"/><circle cx="611.9" cy="413.9" r="2.8"/><circle cx="619.8" cy="364.0" r="2.8"/><circle cx="627.8" cy="258.2" r="2.8"/><circle cx="635.7" cy="414.3" r="2.8"/><circle cx="643.7" cy="394.2" r="2.8"/><circle cx="651.6" cy="278.8" r="2.8"/><circle cx="659.6" cy="409.6" r="2.8"/><circle cx="667.5" cy="384.4" r="2.8"/><circle cx="675.4" cy="353.7" r="2.8"/><circle cx="683.4" cy="412.3" r="2.8"/><circle cx="691.3" cy="378.4" r="2.8"/><circle cx="699.3" cy="305.6" r="2.8"/><circle cx="707.2" cy="399.1" r="2.8"/><circle cx="715.2" cy="380.0" r="2.8"/><circle cx="723.1" cy="154.0" r="2.8"/><circle cx="731.0" cy="363.2" r="2.8"/><circle cx="739.0" cy="254.0" r="2.8"/><circle cx="746.9" cy="212.2" r="2.8"/><circle cx="754.9" cy="383.4" r="2.8"/><circle cx="762.8" cy="301.0" r="2.8"/><circle cx="770.8" cy="191.7" r="2.8"/><circle cx="778.7" cy="379.4" r="2.8"/><circle cx="786.6" cy="313.9" r="2.8"/><circle cx="794.6" cy="293.7" r="2.8"/><circle cx="802.5" cy="365.6" r="2.8"/><circle cx="810.5" cy="343.9" r="2.8"/><circle cx="818.4" cy="226.6" r="2.8"/><circle cx="826.4" cy="365.6" r="2.8"/><circle cx="834.3" cy="341.6" r="2.8"/><circle cx="842.2" cy="221.4" r="2.8"/><circle cx="850.2" cy="351.8" r="2.8"/><circle cx="858.1" cy="325.2" r="2.8"/><circle cx="866.1" cy="95.5" r="2.8"/><circle cx="874.0" cy="338.0" r="2.8"/><circle cx="882.0" cy="318.7" r="2.8"/><circle cx="889.9" cy="229.9" r="2.8"/><circle cx="897.8" cy="387.7" r="2.8"/><circle cx="905.8" cy="374.1" r="2.8"/><circle cx="913.7" cy="353.7" r="2.8"/><circle cx="921.7" cy="402.0" r="2.8"/><circle cx="929.6" cy="381.4" r="2.8"/><circle cx="937.6" cy="349.4" r="2.8"/><circle cx="945.5" cy="405.0" r="2.8"/><circle cx="953.4" cy="401.5" r="2.8"/><circle cx="961.4" cy="300.0" r="2.8"/><circle cx="969.3" cy="406.0" r="2.8"/><circle cx="977.3" cy="375.5" r="2.8"/><circle cx="985.2" cy="359.7" r="2.8"/><circle cx="993.2" cy="381.0" r="2.8"/><circle cx="1001.1" cy="390.3" r="2.8"/></g></svg>
<div class="scard" style="left:2px;width:160px"><div class="st"><i style="background:#f59a13"></i><span>Registrerade</span></div><div class="hr h1"></div><div class="num">80 660</div><div class="hr h2"></div><div class="sub">Referensdatum: Feb 26</div><div class="pct">+ 7,39 %*</div></div><div class="scard" style="left:173px;width:160px"><div class="st"><i style="background:#12964a"></i><span>Nyregistrerade</span></div><div class="hr h1"></div><div class="num">82 550</div><div class="hr h2"></div><div class="sub" style="letter-spacing:-.18px">Jan 16 - Feb 26</div><div class="pct">+ 9,45 %*</div></div><div class="scard" style="left:344px;width:160px"><div class="st"><i style="background:#1976c5"></i><span>Ägarbyte **</span><span class="beta">Beta</span></div><div class="hr h1"></div><div class="num">80 707</div><div class="hr h2"></div><div class="sub" style="letter-spacing:-.18px">Jan 16 - Feb 26</div><div class="pct">+ 37,8 %*</div></div><div class="scard" style="left:515px;width:160px"><div class="st"><i style="background:#fbc62f"></i><span>Importerade</span></div><div class="hr h1"></div><div class="num">2 045</div><div class="hr h2"></div><div class="sub" style="letter-spacing:-.18px">Jan 16 - Feb 26</div><div class="pct">+ 7,12 %*</div></div><div class="scard" style="left:686px;width:159px"><div class="st"><i style="background:#909090"></i><span>Exporterade</span></div><div class="hr h1"></div><div class="num">5 142</div><div class="hr h2"></div><div class="sub" style="letter-spacing:-.18px">Jan 16 - Feb 26</div><div class="pct">+ 46,87 %*</div></div><div class="scard" style="left:857px;width:159px"><div class="st"><i style="background:#ee3e48"></i><span>Skrotade</span></div><div class="hr h1"></div><div class="num">387</div><div class="hr h2"></div><div class="sub" style="letter-spacing:-.18px">Jan 16 - Feb 26</div><div class="pct">+ 39,71 %*</div></div>
</body></html>
